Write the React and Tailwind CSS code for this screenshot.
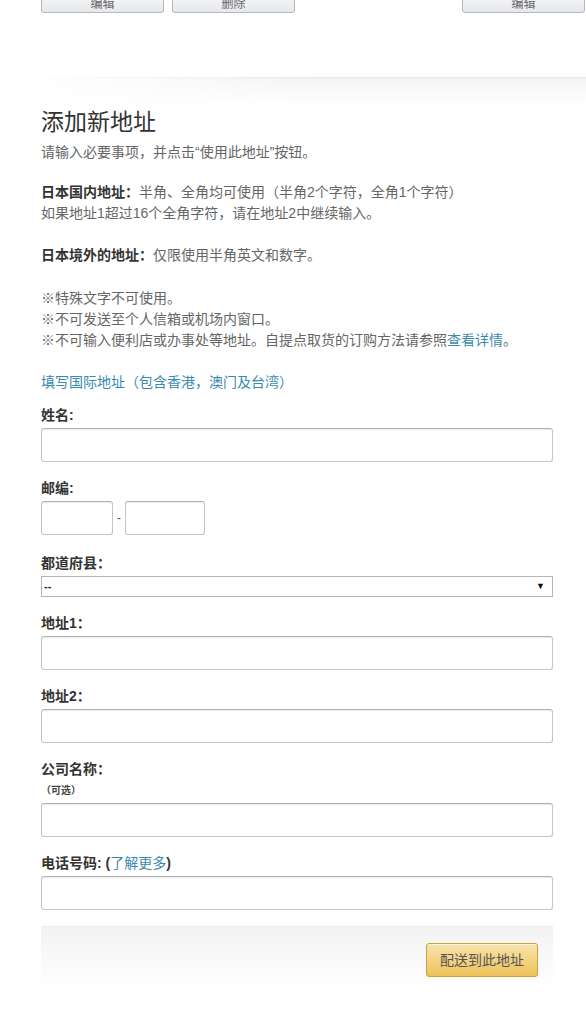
import React from "react";

const font = "font-['Liberation_Sans','Noto_Sans_CJK_SC',sans-serif]";

function Label({ children }) {
  return (
    <div className="text-[14px] leading-[21px] font-bold text-[#333] mb-[2px]">{children}</div>
  );
}

function TextInput({ className = "" }) {
  return (
    <div
      className={`h-[34px] rounded-[3px] border border-[#c4c4c4] border-t-[#b0b0b0] bg-white shadow-[inset_0_1px_1px_rgba(0,0,0,0.08)] ${className}`}
    />
  );
}

function TopButton({ children, className = "" }) {
  return (
    <div
      className={`w-[123px] shrink-0 h-[22px] rounded-[3px] border border-[#b5b8bd] bg-[linear-gradient(to_bottom,#f8f9fa,#e6e8eb)] flex items-center justify-center pt-[3px] text-[12px] leading-[14px] text-[#666] ${className}`}
    >
      {children}
    </div>
  );
}

export default function App() {
  return (
    <div className={`${font} w-[586px] min-h-[1024px] bg-white overflow-hidden`}>
      {/* top buttons (cut off) */}
      <div className="-mt-[9px] h-[22px] flex pl-[41px]">
        <TopButton>编辑</TopButton>
        <TopButton className="ml-[8px]">删除</TopButton>
        <TopButton className="ml-[167px]">编辑</TopButton>
      </div>

      {/* separator gradient */}
      <div className="mt-[64px] h-[30px] bg-[linear-gradient(to_right,#fff_4%,rgba(255,255,255,0)_55%),linear-gradient(to_bottom,#e4e4e4_0px,#f4f4f4_2px,#fff_30px)]" />

      <div className="px-[41px] pr-[33px]">
        <h1 className="text-[23px] leading-[30px] font-normal text-[#333]">添加新地址</h1>
        <p className="mt-[5px] text-[14px] leading-[21px] text-[#666]">
          请输入必要事项，并点击“使用此地址”按钮。
        </p>

        <p className="mt-[19px] text-[14px] leading-[21px] text-[#666]">
          <span className="font-bold text-[#333]">日本国内地址：</span>半角、全角均可使用（半角2个字符，全角1个字符）
          <br />
          如果地址1超过16个全角字符，请在地址2中继续输入。
        </p>

        <p className="mt-[21px] text-[14px] leading-[21px] text-[#666]">
          <span className="font-bold text-[#333]">日本境外的地址：</span>仅限使用半角英文和数字。
        </p>

        <p className="mt-[22px] text-[14px] leading-[21px] text-[#666]">
          ※特殊文字不可使用。
          <br />
          ※不可发送至个人信箱或机场内窗口。
          <br />
          ※不可输入便利店或办事处等地址。自提点取货的订购方法请参照
          <span className="text-[#3a8ab0]">查看详情</span>。
        </p>

        <p className="mt-[21px] text-[14px] leading-[21px] text-[#3a8ab0]">
          填写国际地址（包含香港，澳门及台湾）
        </p>

        <div className="mt-[12px]">
          <Label>姓名:</Label>
          <TextInput />
        </div>

        <div className="mt-[16px]">
          <Label>邮编:</Label>
          <div className="flex items-center">
            <TextInput className="w-[72px]" />
            <span className="w-[12px] text-center text-[12px] text-[#555]">-</span>
            <TextInput className="w-[80px]" />
          </div>
        </div>

        <div className="mt-[18px]">
          <Label>都道府县：</Label>
          <div className="h-[21px] border border-[#b5b5b5] bg-white flex items-center justify-between pl-[2px] pr-[7px]">
            <span className="text-[11px] font-bold text-[#222] leading-none">--</span>
            <span className="text-[9px] text-[#111] leading-none">▼</span>
          </div>
        </div>

        <div className="mt-[16px]">
          <Label>地址1：</Label>
          <TextInput />
        </div>

        <div className="mt-[16px]">
          <Label>地址2：</Label>
          <TextInput />
        </div>

        <div className="mt-[16px]">
          <div className="text-[14px] leading-[21px] font-bold text-[#333]">公司名称：</div>
          <div className="text-[10px] leading-[21px] font-bold text-[#444] mb-[2px]">（可选）</div>
          <TextInput />
        </div>

        <div className="mt-[16px]">
          <Label>
            电话号码: (<span className="font-normal text-[#3a8ab0]">了解更多</span>)
          </Label>
          <TextInput />
        </div>

        <div className="mt-[16px] border-t border-[#ececec] bg-[linear-gradient(to_bottom,#f3f3f3,#ffffff)] pt-[16px] pb-[14px] pr-[15px] flex justify-end">
          <div className="w-[112px] h-[34px] rounded-[3px] border border-[#c9a13f] bg-[linear-gradient(to_bottom,#f8e3ad,#eec25a)] shadow-[inset_0_1px_0_rgba(255,255,255,0.6)] flex items-center justify-center text-[14px] text-[#555]">
            配送到此地址
          </div>
        </div>
      </div>
    </div>
  );
}
